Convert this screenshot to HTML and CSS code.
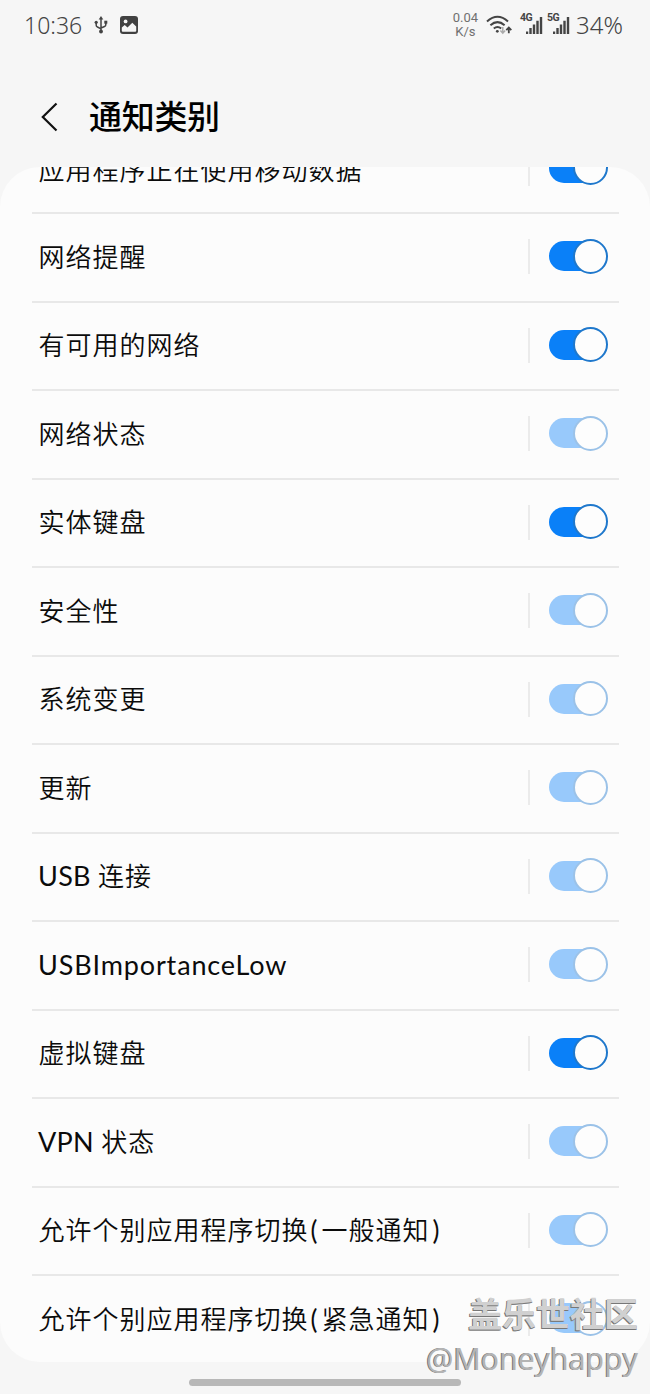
FILE: index.html
```html
<!DOCTYPE html>
<html lang="zh-CN">
<head>
<meta charset="utf-8">
<title>通知类别</title>
<link rel="stylesheet" href="styles.css">
</head>
<body>
<div class="screen">
  <div class="status">
    <span class="clock">10:36</span>
    <svg class="usb" width="14" height="20" viewBox="0 0 14 20" fill="none" stroke="#444" stroke-width="1.5"><path d="M7 3v14M2.2 8v2.2q0 1.3 1.3 1.8L7 13.8M11.8 7.5v2.2q0 1.3-1.3 1.8L7 13"/><path d="M7 1l2.3 3.5H4.7z" fill="#444" stroke="none"/><circle cx="7" cy="16.5" r="1.9" fill="#444" stroke="none"/><circle cx="2.2" cy="7.3" r="1.6" fill="#444" stroke="none"/><path d="M10.3 5.7h3v3h-3z" fill="#444" stroke="none"/></svg>
    <svg class="photo" width="18" height="18" viewBox="0 0 18 18"><rect width="18" height="18" rx="3" fill="#414141"/><circle cx="5.6" cy="5.4" r="1.9" fill="#f6f6f6"/><path d="M1.8 14.2V11.600L4.700 9l2.800 2.400L12.300 6.800l3.900 3.700v4.200q0 1-1 1H2.800q-1 0-1-1z" fill="#f6f6f6"/></svg>
    <span class="spacer"></span>
    <span class="speed"><span>0.04</span><span>K/s</span></span>
    <svg class="wifi" width="26" height="20" viewBox="0 0 26 20" fill="none" stroke="#444" stroke-width="2"><path d="M1 6.5Q11.5-3 22 6.5M4.4 10.2q7.1-6.2 14.2 0M7.8 13.6q3.7-3.2 7.4 0"/><circle cx="11.3" cy="16.3" r="1.4" fill="#444" stroke="none"/><path d="M16.8 12v6M14.4 15.6l2.4 2.6 2.4-2.6" stroke="#aaa" stroke-width="1.5"/><path d="M22.8 18.3V13M20.3 15.2l2.5-2.7 2.5 2.7" stroke-width="1.8"/></svg>
    <span class="signal"><svg width="18" height="18" viewBox="0 0 18 18" fill="#444"><path d="M1 15.500h2.200V18H1zM4.300 12h2.400v6H4.300zM7.800 8.500h2.400V18H7.800zM11.300 4.800h2.400V18h-2.400zM14.800 1h2.400v17h-2.400z"/></svg><b>4G</b></span>
    <span class="signal"><svg width="18" height="18" viewBox="0 0 18 18" fill="#444"><path d="M1 15.500h2.200V18H1zM4.300 12h2.400v6H4.300zM7.800 8.500h2.400V18H7.800zM11.300 4.800h2.400V18h-2.400zM14.800 1h2.400v17h-2.400z"/></svg><b>5G</b></span>
    <span class="battery">34%</span>
  </div>
  <header class="header">
    <svg width="18" height="30" viewBox="0 0 18 30" fill="none" stroke="#111" stroke-width="2.200"><path d="M16.500 1.500L2.800 15 16.500 28.500"/></svg>
    <h1>通知类别</h1>
  </header>
  <main class="card">
    <div class="list">
      <div class="row"><span class="label">应用程序正在使用移动数据</span><span class="rule"></span><span class="toggle"></span></div>
      <div class="row"><span class="label">网络提醒</span><span class="rule"></span><span class="toggle"></span></div>
      <div class="row"><span class="label">有可用的网络</span><span class="rule"></span><span class="toggle"></span></div>
      <div class="row"><span class="label">网络状态</span><span class="rule"></span><span class="toggle dim"></span></div>
      <div class="row"><span class="label">实体键盘</span><span class="rule"></span><span class="toggle"></span></div>
      <div class="row"><span class="label">安全性</span><span class="rule"></span><span class="toggle dim"></span></div>
      <div class="row"><span class="label">系统变更</span><span class="rule"></span><span class="toggle dim"></span></div>
      <div class="row"><span class="label">更新</span><span class="rule"></span><span class="toggle dim"></span></div>
      <div class="row"><span class="label"><span class="latin short">USB </span>连接</span><span class="rule"></span><span class="toggle dim"></span></div>
      <div class="row"><span class="label"><span class="latin">USBImportanceLow</span></span><span class="rule"></span><span class="toggle dim"></span></div>
      <div class="row"><span class="label">虚拟键盘</span><span class="rule"></span><span class="toggle"></span></div>
      <div class="row"><span class="label"><span class="latin short">VPN </span>状态</span><span class="rule"></span><span class="toggle dim"></span></div>
      <div class="row"><span class="label">允许个别应用程序切换<span class="paren">(</span>一般通知<span class="paren close">)</span></span><span class="rule"></span><span class="toggle dim"></span></div>
      <div class="row"><span class="label">允许个别应用程序切换<span class="paren">(</span>紧急通知<span class="paren close">)</span></span><span class="rule"></span><span class="toggle dim"></span></div>
    </div>
  </main>
  <div class="handle"></div>
  <div class="watermark"><div class="site">盖乐世社区</div><div class="user">@Moneyhappy</div></div>
</div>
</body>
</html>
```
FILE: styles.css
```css
*, *::after { box-sizing: border-box; }
body { margin: 0; background: #f6f6f6; font-family: Lato, "Noto Sans CJK SC", sans-serif; color: #0b0b0b; }
.screen { position: relative; width: 650px; height: 1394px; overflow: hidden; display: flex; flex-direction: column; align-items: center; }
.status { width: 100%; height: 50px; padding: 0 27px 0 24px; display: flex; align-items: center; color: #444; font-family: "Noto Sans", sans-serif; font-weight: 300; flex: none; }
.clock { width: 70px; font-size: 23px; line-height: 32px; white-space: nowrap; }
.photo { margin-left: 12px; }
.spacer { flex: 1; }
.speed { display: flex; flex-direction: column; align-items: center; font-family: Roboto, sans-serif; font-size: 13px; line-height: 14px; margin-right: 8px; font-weight: 400; color: #707070; }
.wifi { margin-right: 8px; }
.signal { position: relative; width: 27px; height: 18px; display: flex; justify-content: flex-end; padding-right: 4px; }
.signal b { position: absolute; left: 0; top: -4px; font: bold 10.500px/12px Roboto, sans-serif; letter-spacing: -0.5px; }
.signal svg { flex: none; }
.battery { font-size: 24px; line-height: 32px; margin: -1px 0 0 2px; }
.header { width: 100%; height: 117px; padding: 17px 0 0 40px; display: flex; align-items: center; gap: 31px; flex: none; }
.header h1 { margin: -5px 0 0; font: 500 33px/50px "Noto Sans CJK SC", sans-serif; letter-spacing: -0.3px; color: #000; }
.card { width: 100%; height: 1195px; background: #fcfcfc; border-radius: 40px; overflow: hidden; flex: none; }
.list { margin-top: -41.200px; padding: 0 32px; }
.row { height: 88.500px; padding: 0 11px 0 6.500px; border-bottom: 2px solid #e8e8e8; display: flex; align-items: center; width: 587px; }
.row:last-child { border-color: transparent; }
.label { flex: 1; margin-top: -2px; font-size: 26px; line-height: 40px; letter-spacing: 1px; font-weight: 350; white-space: nowrap; }
.row:first-child .label { margin-top: 1px; }
.latin { font-size: 27px; font-weight: 400; letter-spacing: 0.850px; margin-left: -0.500px; }
.short { letter-spacing: 0.300px; }
.paren { font-weight: 400; padding: 0 3px 0 2px; }
.close { padding-left: 3px; }
.rule { width: 2px; height: 35px; margin: -2px 19px 0 0; background: #ebebeb; }
.toggle { position: relative; width: 59px; height: 30px; margin-top: -3px; background: linear-gradient(#0a80f8, #0a80f8) 0 0 / 40px 30px no-repeat; border-radius: 15px; }
.toggle::after { content: ""; position: absolute; right: 0; top: -2.500px; width: 35px; height: 35px; border: 2px solid #1f78cc; border-radius: 50%; background: #fdfdfd; }
.toggle.dim { background-image: linear-gradient(#98c9fb, #98c9fb); }
.toggle.dim::after { border-color: #9bc2e8; }
.handle { width: 272px; height: 7px; border-radius: 4px; background: #b8b8b8; margin-top: 17px; }
.watermark { position: absolute; right: 12px; bottom: 14px; text-align: right; white-space: nowrap; }
.site { font: 700 34px/40px "Noto Sans CJK SC", sans-serif; color: #d0d0d0; text-shadow: -1px 1px 0 #777, 0 1px 0 #888; margin-bottom: 5px; }
.user { font: 400 30.400px/42px "Open Sans", sans-serif; color: #b4b4b4; text-shadow: -1px 0 0 #777; }
```
